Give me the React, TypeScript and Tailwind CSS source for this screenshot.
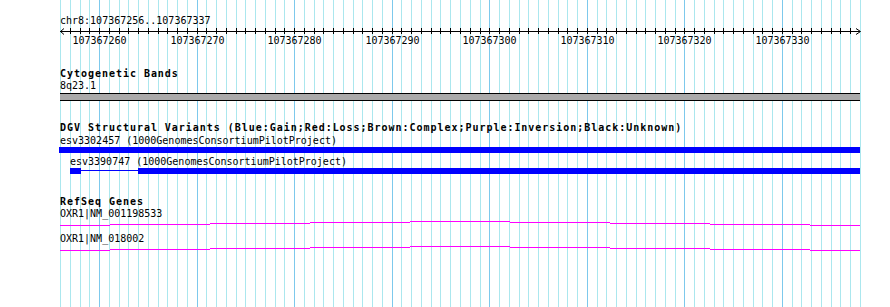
const BP = 800 / 82;
const gridX = Array.from({ length: 83 }, (_, i) => Math.round(60 + i * BP));
const majors = [4, 14, 24, 34, 44, 54, 64, 74];

// gene line drawn as stepped segments (x from, x to, y offset in row)
const geneSteps: [number, number, number][] = [
  [60, 110, 5],
  [110, 210, 4],
  [210, 310, 3],
  [310, 410, 2],
  [410, 510, 1],
  [510, 610, 2],
  [610, 710, 3],
  [710, 810, 4],
  [810, 860, 5],
];

function GeneLine() {
  return (
    <svg width={800} height={13} className="block" shapeRendering="crispEdges">
      {geneSteps.map(([a, b, y]) => (
        <line key={a} x1={a - 60} x2={b - 60} y1={y + 0.5} y2={y + 0.5} stroke="#ff00ff" strokeWidth={1} />
      ))}
    </svg>
  );
}

function Ruler() {
  return (
    <svg width={804} height={8} className="block overflow-visible" shapeRendering="crispEdges">
      <line x1={0} x2={800} y1={4.5} y2={4.5} stroke="#000" />
      {gridX.map((x, i) =>
        i === 0 || i === 82 ? null : (
          <line key={i} x1={x - 60 + 0.5} x2={x - 60 + 0.5} y1={1} y2={7} stroke="#000" />
        )
      )}
      <polyline points="4,1.5 0.5,4.5 4,7.5" fill="none" stroke="#000" shapeRendering="auto" />
      <polyline points="796,1.5 800.5,4.5 796,7.5" fill="none" stroke="#000" shapeRendering="auto" />
    </svg>
  );
}

export default function App() {
  return (
    <div className="relative w-[890px] h-[307px] overflow-hidden bg-white">
      <svg width={890} height={307} className="absolute inset-0" shapeRendering="crispEdges">
        {gridX.map((x, i) => (
          <line
            key={i}
            x1={x + 0.5}
            x2={x + 0.5}
            y1={0}
            y2={307}
            stroke={majors.includes(i) ? "#7dc9ec" : "#abe7ee"}
            strokeWidth={1}
          />
        ))}
      </svg>

      <div className="relative pt-[15px] pl-[60px] text-[10px] leading-[12px] text-black font-['DejaVu_Sans_Mono',monospace]">
        <div className="h-[12px] whitespace-nowrap">chr8:107367256..107367337</div>
        <Ruler />
        <div className="relative h-[12px]">
          {majors.map((i) => (
            <span
              key={i}
              className="absolute top-0 -translate-x-1/2 whitespace-nowrap"
              style={{ left: gridX[i] - 60 + 0.5 }}
            >
              {107367256 + i}
            </span>
          ))}
        </div>

        <div className="mt-[21px] h-[12px] font-bold tracking-[0.97px] whitespace-nowrap">Cytogenetic Bands</div>
        <div className="h-[12px]">8q23.1</div>
        <div className="mt-px h-[8px] w-[800px] border-y border-black bg-[#aaaaaa]" />

        <div className="mt-[21px] h-[12px] font-bold tracking-[0.97px] whitespace-nowrap">
          DGV Structural Variants (Blue:Gain;Red:Loss;Brown:Complex;Purple:Inversion;Black:Unknown)
        </div>
        <div className="mt-px h-[12px] whitespace-nowrap">esv3302457 (1000GenomesConsortiumPilotProject)</div>
        <div className="-ml-px h-[6px] w-[801px] bg-[#0000ff]" />
        <div className="mt-[3px] h-[12px] pl-[10px] whitespace-nowrap">esv3390747 (1000GenomesConsortiumPilotProject)</div>
        <div className="flex h-[6px] pl-[10px]">
          <div className="w-[11px] bg-[#0000ff]" />
          <div className="w-[57px] pt-[2px]">
            <div className="h-px bg-[#0000ff]" />
          </div>
          <div className="w-[722px] bg-[#0000ff]" />
        </div>

        <div className="mt-[22px] h-[12px] font-bold tracking-[0.97px] whitespace-nowrap">RefSeq Genes</div>
        <div className="h-[12px] whitespace-nowrap">OXR1|NM_001198533</div>
        <GeneLine />
        <div className="h-[12px] whitespace-nowrap">OXR1|NM_018002</div>
        <GeneLine />
      </div>
    </div>
  );
}
